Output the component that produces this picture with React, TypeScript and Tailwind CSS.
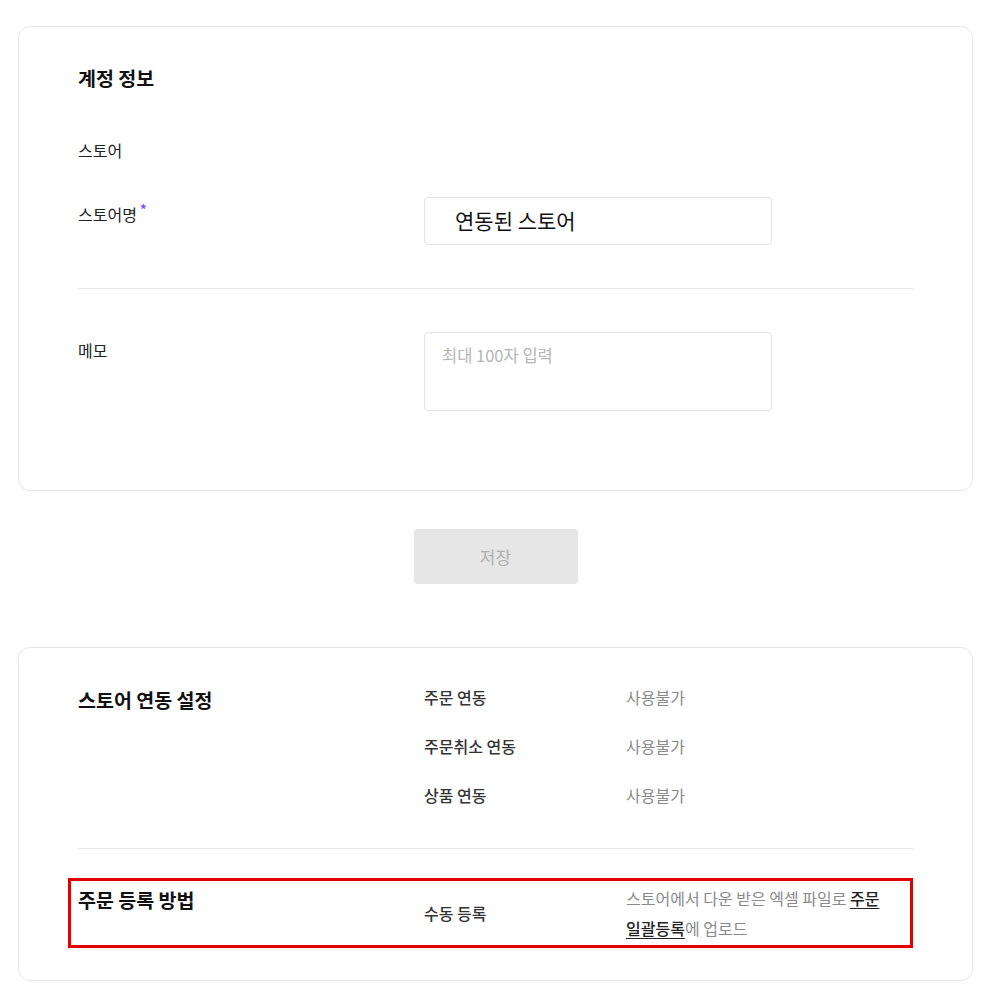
import React from "react";

const font = { fontFamily: '"Noto Sans CJK KR", "Noto Sans", sans-serif' };

function Card({ children, className = "" }: { children: React.ReactNode; className?: string }) {
  return (
    <section className={`w-[955px] rounded-[12px] border border-[#e6e6e6] bg-white px-[59px] ${className}`}>
      {children}
    </section>
  );
}

const syncRows = [
  { label: "주문 연동", value: "사용불가" },
  { label: "주문취소 연동", value: "사용불가" },
  { label: "상품 연동", value: "사용불가" },
];

export default function App() {
  return (
    <div className="min-h-screen bg-white pt-[26px] pl-[18px] break-keep" style={font}>
      {/* 계정 정보 */}
      <Card className="pt-[38px] pb-[79px]">
        <h2 className="text-[19.5px] leading-[26px] font-bold text-[#111]">계정 정보</h2>

        <div className="mt-[48px] text-[16px] leading-[22px] text-[#222]">스토어</div>

        <div className="mt-[36px] flex">
          <div className="w-[346px] pt-[6px] text-[16px] leading-[22px] text-[#222]">
            스토어명
            <span className="relative -top-[7px] ml-[3px] text-[13px] font-bold text-[#6e57ff]">*</span>
          </div>
          <div className="flex h-[48px] w-[348px] items-center rounded-[4px] border border-[#e3e3e3] pl-[30px] text-[21px] text-[#111]">
            연동된 스토어
          </div>
        </div>

        <div className="mt-[43px] h-px bg-[#e8e8e8]" />

        <div className="mt-[43px] flex">
          <div className="w-[346px] pt-[7px] text-[16px] leading-[22px] text-[#222]">메모</div>
          <textarea
            placeholder="최대 100자 입력"
            className="h-[79px] w-[348px] resize-none rounded-[4px] border border-[#e3e3e3] px-[17px] pt-[11px] text-[16.5px] leading-[22px] text-[#222] outline-none placeholder:text-[#b5b5b5]"
          />
        </div>
      </Card>

      {/* 저장 */}
      <div className="flex w-[955px] justify-center pt-[38px]">
        <button
          disabled
          className="h-[55px] w-[164px] rounded-[4px] bg-[#e6e6e6] text-[17px] text-[#b0b0b0]"
        >
          저장
        </button>
      </div>

      {/* 스토어 연동 설정 */}
      <Card className="mt-[63px] pt-[38px] pb-[32px]">
        <div className="flex">
          <h2 className="w-[346px] pt-px text-[19.5px] leading-[26px] font-bold text-[#111]">스토어 연동 설정</h2>
          <div className="flex flex-col gap-[27px]">
            {syncRows.map((row) => (
              <div key={row.label} className="flex text-[16px] leading-[22px]">
                <span className="w-[202px] font-medium text-[#333]">{row.label}</span>
                <span className="text-[#8a8a8a]">{row.value}</span>
              </div>
            ))}
          </div>
        </div>

        <div className="mt-[42px] h-px bg-[#e8e8e8]" />

        <div className="mt-[29px] -ml-[10px] flex border-[3px] border-[#e30000] py-[2px] pl-[7px]">
          <h2 className="w-[346px] pt-[4px] text-[19.5px] leading-[26px] font-bold text-[#111]">주문 등록 방법</h2>
          <div className="flex w-[202px] items-center text-[16px] leading-[22px] font-medium text-[#333]">
            수동 등록
          </div>
          <p className="w-[283px] pr-[6px] text-[16px] leading-[30px] text-[#8a8a8a]">
            스토어에서 다운 받은 엑셀 파일로{" "}
            <span className="font-medium text-[#222] underline underline-offset-[3px]">주문 일괄등록</span>에 업로드
          </p>
        </div>
      </Card>
    </div>
  );
}
